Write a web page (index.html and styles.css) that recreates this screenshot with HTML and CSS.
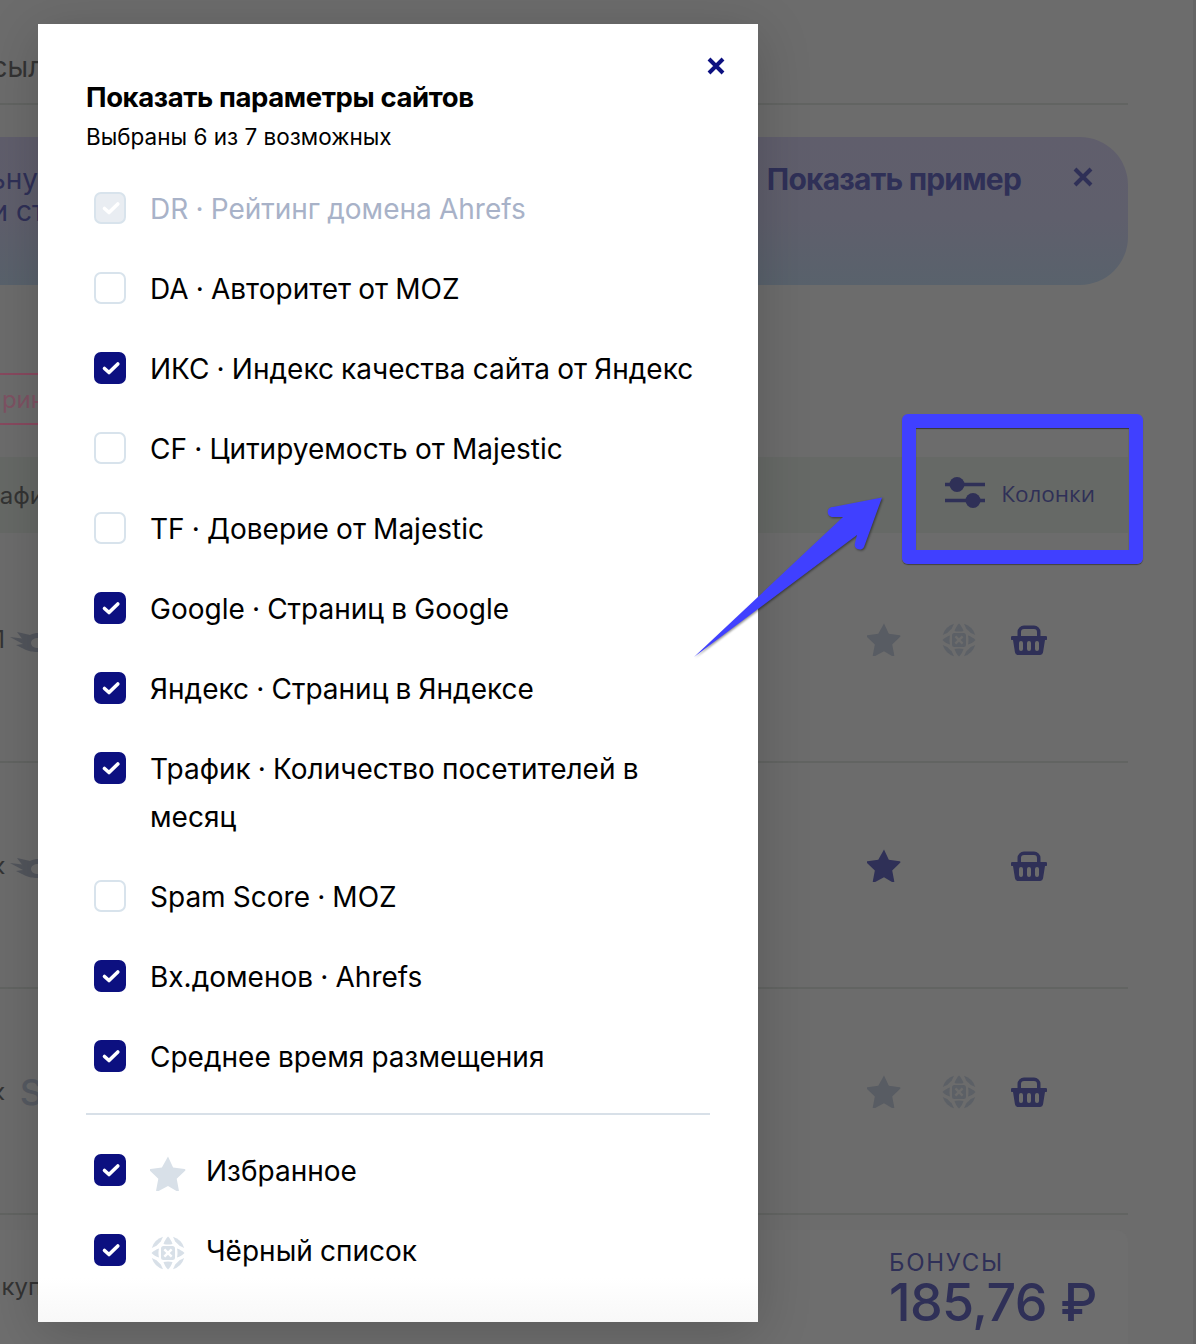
FILE: index.html
```html
<!DOCTYPE html>
<html lang="ru">
<head>
<meta charset="utf-8">
<title>Показать параметры сайтов</title>
<link rel="stylesheet" href="styles.css">
</head>
<body>
<svg class="defs" width="0" height="0" aria-hidden="true">
  <symbol id="star" viewBox="0 0 36 36"><path d="M18 1.500l5.100 10.900 11.400 1.500c.9.100 1.200 1.200.6 1.800l-8.400 8.100 2.200 11.600c.1.900-.8 1.500-1.600 1.100L18 31l-10.300 5.500c-.8.400-1.700-.2-1.600-1.100l2.200-11.600-8.400-8.100c-.6-.6-.3-1.700.6-1.800l11.400-1.500z"/></symbol>
  <symbol id="globe" viewBox="0 0 36 36">
    <path d="M13.500 9C14.500 6 16 3.500 18 1.500c2 2 3.500 4.500 4.500 7.500-3 .7-6 .7-9 0z"/>
    <path d="M13.500 27c1 3 2.500 5.500 4.500 7.500 2-2 3.500-4.500 4.500-7.500-3-.7-6-.7-9 0z"/>
    <path d="M9 13.500C6 14.500 3.500 16 1.500 18c2 2 4.500 3.500 7.500 4.500-.7-3-.7-6 0-9z"/>
    <path d="M27 13.500c3 1 5.500 2.500 7.500 4.500-2 2-4.500 3.500-7.500 4.500.7-3 .7-6 0-9z"/>
    <path d="M13 1.800A17 17 0 0 0 1.800 13L6.500 10.800 10.800 6.500z"/>
    <path d="M23 1.800A17 17 0 0 1 34.200 13L29.500 10.800 25.200 6.500z"/>
    <path d="M13 34.200A17 17 0 0 1 1.800 23L6.500 25.200 10.800 29.500z"/>
    <path d="M23 34.200A17 17 0 0 0 34.200 23L29.500 25.200 25.200 29.500z"/>
    <path fill-rule="evenodd" d="M13.500 11h9a2.500 2.500 0 0 1 2.500 2.500v9a2.500 2.500 0 0 1-2.500 2.500h-9a2.500 2.500 0 0 1-2.500-2.500v-9a2.500 2.500 0 0 1 2.500-2.500zM15.200 13.500l-1.700 1.700 2.800 2.800-2.800 2.800 1.700 1.700 2.800-2.800 2.800 2.800 1.700-1.700-2.800-2.800 2.800-2.800-1.700-1.700-2.800 2.800z"/>
  </symbol>
  <symbol id="basket" viewBox="0 0 36 30">
    <path fill-rule="evenodd" d="M6.500 11V7A6.500 6.500 0 0 1 13 .5h10A6.500 6.500 0 0 1 29.500 7v4h5a1.800 1.800 0 0 1 0 4H34l-2 12.500A3 3 0 0 1 29 30H7a3 3 0 0 1-3-2.500L2 15h-.5a1.800 1.800 0 0 1 0-4zM10 11h16V7a3 3 0 0 0-3-3H13a3 3 0 0 0-3 3zM10 16a2 2 0 0 0-2 2v6a2 2 0 0 0 4 0v-6a2 2 0 0 0-2-2zm8 0a2 2 0 0 0-2 2v6a2 2 0 0 0 4 0v-6a2 2 0 0 0-2-2zm8 0a2 2 0 0 0-2 2v6a2 2 0 0 0 4 0v-6a2 2 0 0 0-2-2z"/>
  </symbol>
  <symbol id="check" viewBox="0 0 32 32"><path d="M10.500 16.500l4.500 4L23.800 12" fill="none" stroke="currentColor" stroke-width="3.600" stroke-linecap="round" stroke-linejoin="round"/></symbol>
  <symbol id="swoosh" viewBox="0 0 28 20"><path d="M7 0L20 3C23 1.500 26 1 28 1V6C24 6 21 8 21 11C21 14 24 16 28 16V20C22 20 19 19 16 18L6 13L13 12L0 5L12 6.500z"/></symbol>
</svg>

<div class="page">
  <div class="topbar"><div class="clip-left"><span class="top-text">Ссылки</span></div></div>

  <div class="banner">
    <div class="clip-left banner-copy">
      <p>Уникальну</p>
      <p class="banner-line2">и ст</p>
    </div>
    <div class="banner-actions">
      <span class="banner-link">Показать пример</span>
      <svg class="banner-close" viewBox="0 0 20 20"><path d="M2 2l16 16M18 2L2 18"/></svg>
    </div>
  </div>

  <div class="filter-row"><div class="chip"><span>Прин</span></div></div>

  <div class="thead">
    <div class="clip-left"><span class="muted-text head-text">афик</span></div>
    <div class="columns">
      <svg class="sliders" viewBox="0 0 40 30"><path d="M0 7h40M0 23h40"/><circle cx="12" cy="7" r="7.500"/><circle cx="28" cy="23" r="7.500"/></svg>
      <span class="columns-label">Колонки</span>
    </div>
  </div>

  <div class="row row-first">
    <div class="clip-left row-lead"><span class="muted-text">1</span><svg class="swoosh"><use href="#swoosh"/></svg></div>
    <div class="actions">
      <svg class="act-star"><use href="#star"/></svg>
      <svg class="act-globe"><use href="#globe"/></svg>
      <svg class="act-basket"><use href="#basket"/></svg>
    </div>
  </div>
  <div class="row">
    <div class="clip-left row-lead"><span class="muted-text">к</span><svg class="swoosh"><use href="#swoosh"/></svg></div>
    <div class="actions">
      <svg class="act-star is-on"><use href="#star"/></svg>
      <span class="act-globe"></span>
      <svg class="act-basket"><use href="#basket"/></svg>
    </div>
  </div>
  <div class="row">
    <div class="clip-left row-lead"><span class="muted-text">к</span><span class="big-s">S</span></div>
    <div class="actions">
      <svg class="act-star"><use href="#star"/></svg>
      <svg class="act-globe"><use href="#globe"/></svg>
      <svg class="act-basket"><use href="#basket"/></svg>
    </div>
  </div>

  <div class="footer">
    <div class="clip-left"><span class="muted-text foot-text">куп</span></div>
    <div class="bonus">
      <div class="bonus-label">БОНУСЫ</div>
      <div class="bonus-value">185,76 ₽</div>
    </div>
  </div>
  <div class="scroll-edge"></div>
</div>

<div class="highlight"></div>

<div class="modal">
  <svg class="modal-close" viewBox="0 0 18 18"><path d="M2 2l14 14M16 2L2 16"/></svg>
  <h2 class="modal-title">Показать параметры сайтов</h2>
  <p class="modal-sub">Выбраны 6 из 7 возможных</p>

  <ul class="options">
    <li class="option is-disabled"><span class="box box-disabled"><svg><use href="#check"/></svg></span><span>DR · Рейтинг домена Ahrefs</span></li>
    <li class="option"><span class="box"></span><span>DA · Авторитет от MOZ</span></li>
    <li class="option"><span class="box box-on"><svg><use href="#check"/></svg></span><span>ИКС · Индекс качества сайта от Яндекс</span></li>
    <li class="option"><span class="box"></span><span>CF · Цитируемость от Majestic</span></li>
    <li class="option"><span class="box"></span><span>TF · Доверие от Majestic</span></li>
    <li class="option"><span class="box box-on"><svg><use href="#check"/></svg></span><span>Google · Страниц в Google</span></li>
    <li class="option"><span class="box box-on"><svg><use href="#check"/></svg></span><span>Яндекс · Страниц в Яндексе</span></li>
    <li class="option"><span class="box box-on"><svg><use href="#check"/></svg></span><span>Трафик · Количество посетителей в месяц</span></li>
    <li class="option"><span class="box"></span><span>Spam Score · MOZ</span></li>
    <li class="option"><span class="box box-on"><svg><use href="#check"/></svg></span><span>Вх.доменов · Ahrefs</span></li>
    <li class="option"><span class="box box-on"><svg><use href="#check"/></svg></span><span>Среднее время размещения</span></li>
  </ul>
  <div class="divider"></div>
  <ul class="options">
    <li class="option"><span class="box box-on"><svg><use href="#check"/></svg></span><svg class="opt-icon"><use href="#star"/></svg><span>Избранное</span></li>
    <li class="option"><span class="box box-on"><svg><use href="#check"/></svg></span><svg class="opt-icon"><use href="#globe"/></svg><span>Чёрный список</span></li>
  </ul>
  <div class="modal-fade"></div>
</div>

<svg class="arrow" viewBox="0 0 200 170">
  <path d="M4 167L153 27H143C136 27 136 17 143 17L192 7.500L174 57C171 62 163 59 165 53L167 45z"/>
</svg>
</body>
</html>
```
FILE: styles.css
```css
* { box-sizing: border-box; }
html, body { margin: 0; padding: 0; }
body { font-family: Inter, "Noto Sans", sans-serif; color: #000; width: 1196px; height: 1344px; overflow: hidden; position: relative; }
.defs { position: absolute; }
ul { list-style: none; margin: 0; padding: 0; }
p { margin: 0; }

/* dimmed page behind the modal */
.page { width: 1196px; height: 1344px; overflow: hidden; background: #6c6c6c; display: flex; flex-direction: column; padding-right: 68px; position: relative; color: #2f3057; }
.clip-left { width: 100px; display: flex; flex-direction: column; align-items: flex-end; overflow: hidden; white-space: nowrap; flex: none; }
.muted-text { font-size: 24px; line-height: 32px; color: #333; }
.top-text { font-size: 28px; line-height: 34px; color: #333; }
.topbar { height: 105px; border-bottom: 2px solid #626462; padding-top: 50px; flex: none; }
.topbar .clip-left { width: 76px; }

.banner { height: 148px; margin-top: 32px; flex: none; display: flex; justify-content: space-between; border-radius: 0 48px 48px 0; background: linear-gradient(180deg, #605e6c 0%, #5f5f6c 55%, #59626c 100%); }
.banner-copy { width: 38px; padding-top: 26px; font-size: 28px; line-height: 32px; }
.banner-line2 { margin-right: -7px; }
.banner-actions { display: flex; align-items: flex-start; padding: 22px 35px 0 0; }
.banner-link { font-size: 30px; line-height: 40px; font-weight: 700; letter-spacing: -.8px; }
.banner-close { width: 20px; height: 20px; margin: 8px 0 0 52px; stroke: #2f3057; stroke-width: 4; fill: none; }

.filter-row { height: 52px; margin-top: 88px; flex: none; }
.chip { width: 38px; height: 52px; border: 2px solid #88495f; border-width: 2px 0; overflow: hidden; display: flex; justify-content: flex-end; align-items: center; color: #7e5263; font-size: 24px; white-space: nowrap; }
.chip span { margin-right: -7px; }

.thead { height: 76px; margin-top: 32px; background: #666966; display: flex; justify-content: space-between; align-items: center; flex: none; }
.thead .clip-left { width: 38px; padding-top: 2px; }
.head-text { margin-right: -19px; }
.columns { display: flex; align-items: center; gap: 16px; padding: 0 33px 5px 0; font-family: "Open Sans", sans-serif; font-size: 22.500px; color: #2f3057; }
.columns-label { margin-top: 2px; }
.sliders { width: 40px; height: 31px; fill: #2f3057; stroke: none; }
.sliders path { stroke: #2f3057; stroke-width: 3.500; }

.row { height: 226px; flex: none; border-bottom: 2px solid #626462; display: flex; justify-content: space-between; padding-top: 83px; }
.row-first { height: 230px; padding-top: 87px; }
.row-lead { flex-direction: row; justify-content: flex-end; align-items: center; width: 38px; height: 40px; gap: 5px; }
.swoosh { width: 28px; height: 20px; fill: #52555c; flex: none; margin-top: 4px; }
.big-s { font-size: 36px; font-weight: 500; color: #565a62; margin: 0 -5px 0 10px; }
.actions { display: flex; align-items: center; height: 40px; gap: 0; padding-right: 81px; }
.act-star { width: 34px; height: 34px; fill: #585c63; margin: 0 40px 2px 0; }
.act-star.is-on { fill: #2f3057; }
.act-globe { width: 36px; height: 36px; fill: #5c6066; margin-right: 34px; display: block; }
.act-basket { width: 36px; height: 30px; fill: #2f3057; }

.footer { flex: none; height: 115px; margin-top: 15px; background: #6e6e6e; border-radius: 0 12px 0 0; display: flex; justify-content: space-between; }
.footer .clip-left { width: 38px; padding-top: 41px; }
.foot-text { margin-right: -4px; }
.bonus { padding: 19px 33px 0 0; width: 239px; flex: none; white-space: nowrap; }
.bonus-label { font-size: 24px; line-height: 28px; letter-spacing: 1.700px; }
.bonus-value { font-size: 52px; line-height: 52px; font-weight: 500; letter-spacing: -.6px; }
.scroll-edge { position: absolute; right: 0; top: 0; bottom: 0; width: 3px; background: #656565; }

/* annotation */
.highlight { position: absolute; left: 902px; top: 414px; width: 241px; height: 150px; border: 14px solid #4040ff; border-radius: 6px; box-shadow: inset 0 1px 1px rgba(0,0,0,.5), 0 1px 1px rgba(0,0,0,.4); }
.arrow { position: absolute; left: 690px; top: 490px; width: 200px; height: 170px; overflow: visible; fill: #4040ff; filter: drop-shadow(1px 1px 1px rgba(0,0,0,.45)); }

/* modal */
.modal { position: absolute; left: 38px; top: 24px; width: 720px; height: 1298px; background: #fff; padding: 54px 48px 0; box-shadow: 0 10px 50px rgba(0,0,0,.18); }
.modal-close { position: absolute; left: 669px; top: 33px; width: 18px; height: 18px; stroke: #0c1080; stroke-width: 4; fill: none; }
.modal-title { margin: 0; font-size: 27.500px; line-height: 38px; font-weight: 700; letter-spacing: -.4px; }
.modal-sub { font-size: 22.500px; line-height: 32px; margin-top: 5px; }
.options { margin-top: 32px; }
.option { display: flex; align-items: flex-start; font-size: 28px; line-height: 48px; padding: 0 8px 32px; gap: 24px; word-spacing: -.7px; }
.option:last-child { padding-bottom: 0; }
.divider { height: 2px; background: #d8e0e8; margin-top: 32px; }
.divider + .options { margin-top: 32px; }
.box { flex: none; width: 32px; height: 32px; border: 2px solid #d8e3ec; border-radius: 7px; margin-top: 7px; display: block; background: #fff; }
.box svg { display: block; width: 32px; height: 32px; margin: -2px; }
.box-on { background: #0c1080; border-color: #0c1080; color: #fff; }
.box-disabled { background: #e9edf2; color: #fff; }
.is-disabled { color: #a8b2c8; }
.opt-icon { flex: none; width: 36px; height: 36px; fill: #d8e0e8; margin: 8px -4px 0 0; }
.modal-fade { position: absolute; left: 0; right: 0; bottom: 0; height: 44px; background: linear-gradient(180deg, rgba(248,248,248,0), #f8f8f8); }
```
